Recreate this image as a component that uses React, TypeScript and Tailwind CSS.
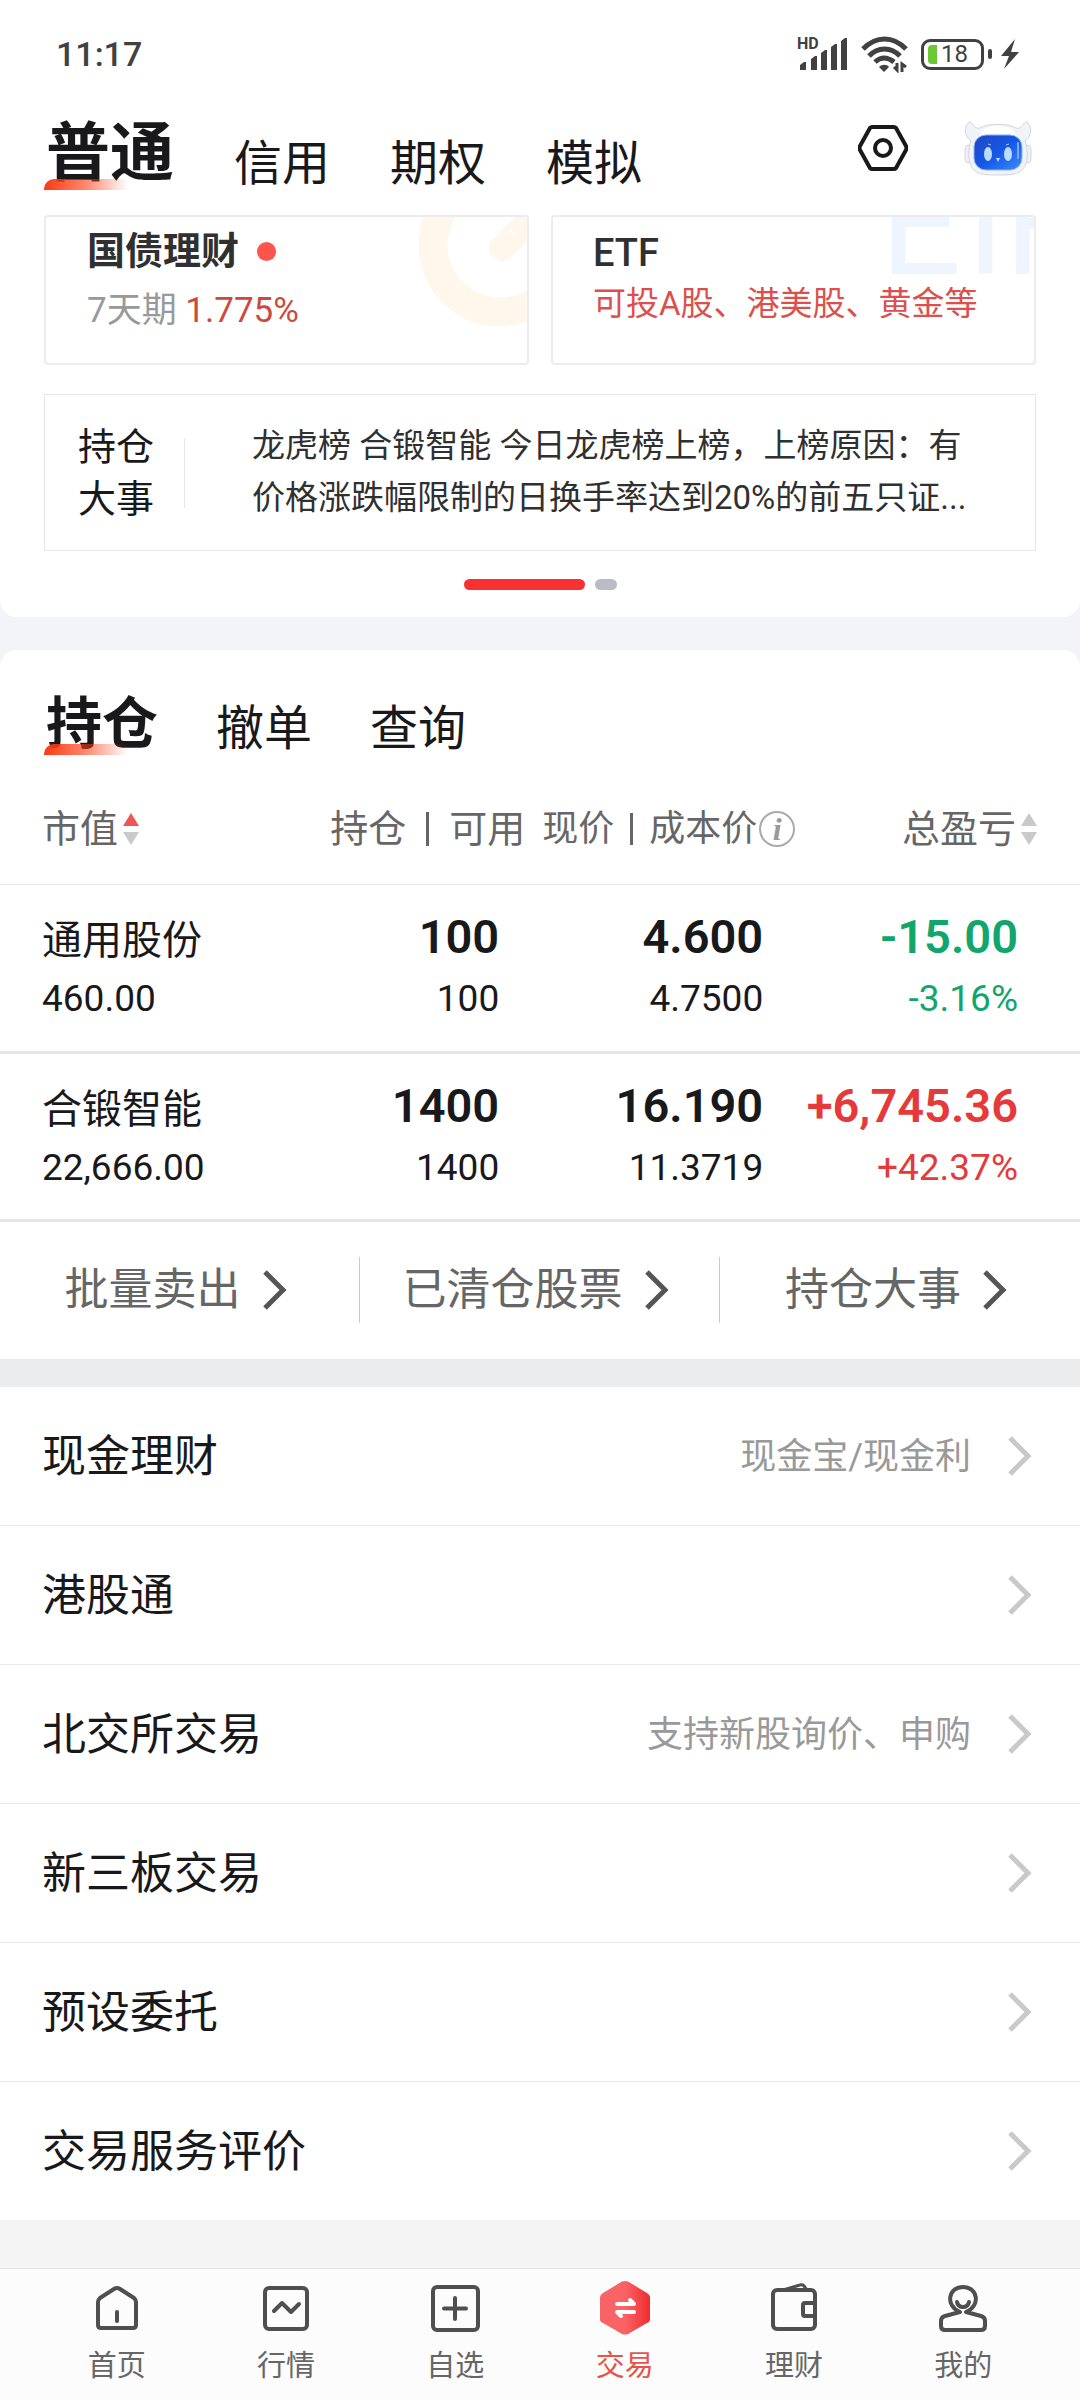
import type { ReactNode } from "react";

const holdings = [
  {
    name: "通用股份",
    value: "460.00",
    amount: "100",
    usable: "100",
    price: "4.600",
    cost: "4.7500",
    profit: "-15.00",
    rate: "-3.16%",
    color: "text-[#12a56c]",
  },
  {
    name: "合锻智能",
    value: "22,666.00",
    amount: "1400",
    usable: "1400",
    price: "16.190",
    cost: "11.3719",
    profit: "+6,745.36",
    rate: "+42.37%",
    color: "text-[#e5393a]",
  },
];

const services = [
  { title: "现金理财", note: "现金宝/现金利" },
  { title: "港股通", note: "" },
  { title: "北交所交易", note: "支持新股询价、申购" },
  { title: "新三板交易", note: "" },
  { title: "预设委托", note: "" },
  { title: "交易服务评价", note: "" },
];

function StatusBar() {
  return (
    <div className="flex h-[108px] items-center justify-between pl-14 pr-[60px] text-[#414141]">
      <span className="text-[34px] font-medium leading-none">11:17</span>
      <div className="flex items-center gap-3">
        <svg width="52" height="44" viewBox="0 -4 52 44" fill="currentColor">
          <text x="0" y="13" fontSize="16" fontWeight="700">HD</text>
          <path d="M3 29l4-3h2v8H3zM14 23l4-3h2v14h-6zM24 17l4-3h2v20h-6zM34 11l4-3h2v26h-6zM44 5l4-3h2v32h-6z" />
        </svg>
        <svg width="48" height="38" viewBox="0 0 48 38" fill="none" stroke="currentColor" strokeWidth="5">
          <path d="M2 14C15 .5 32 .5 45 14M8 21c9-9.500 22-9.500 31 0M14 27c6-5.500 12-5.500 19 0" />
          <path d="M18 32c3-3 8-3 10 0l-5 5z" fill="currentColor" stroke="none" />
          <path d="M36 28v7l-3-3M41 37v-8l4 3" strokeWidth="3" />
        </svg>
        <div className="flex items-center gap-1">
          <div className="flex h-[31px] w-[63px] items-center gap-1 rounded-[9px] border-3 border-[#414141] px-1">
            <span className="h-[19px] w-[9px] rounded-l-sm bg-[#6ac932]" />
            <span className="text-[24px] leading-none">18</span>
          </div>
          <span className="h-2.5 w-1 rounded-sm bg-[#414141]" />
        </div>
        <svg width="20" height="30" viewBox="0 0 20 30" fill="currentColor" className="-ml-1">
          <path d="M15 0L1 17h8L4 30l15-17h-8z" />
        </svg>
      </div>
    </div>
  );
}

function Robot() {
  return (
    <svg width="68" height="56" viewBox="0 0 68 56">
      <defs>
        <linearGradient id="face" x1="0" y1="0" x2="1" y2="1">
          <stop offset="0" stopColor="#2447c4" />
          <stop offset="0.5" stopColor="#1457e6" />
          <stop offset="1" stopColor="#3f8bff" />
        </linearGradient>
      </defs>
      <rect x="1" y="25" width="9" height="18" rx="4" fill="#f1eff3" stroke="#d5d5de" />
      <rect x="58" y="25" width="9" height="18" rx="4" fill="#f1eff3" stroke="#d5d5de" />
      <path
        d="M5 2C-1 8 1 17 7 21c-3 8-3 18 0 25 5 9 14 9 27 9s22 0 27-9c3-7 3-17 0-25 6-4 8-13 2-19-4-1-4 8-11 6C44 3 24 3 16 8 9 10 9 1 5 2z"
        fill="#f0f3f8"
        stroke="#d3d6de"
      />
      <path d="M20 9c8-4 20-4 28 0l5 7c-11-3-27-3-38 0z" fill="#fff" />
      <rect x="10" y="15" width="48" height="35" rx="12" fill="url(#face)" stroke="#8fb2f5" />
      <ellipse cx="24" cy="34" rx="4" ry="7" fill="#b9dcff" />
      <ellipse cx="44" cy="34" rx="4" ry="7" fill="#b9dcff" />
      <path d="M24 24l3 1M42 25l3-1" stroke="#9fc4ff" strokeWidth="1" />
      <path d="M32 38h4l-2 4z" fill="#b9dcff" />
      <path d="M54 23v15" stroke="#7da9f8" strokeWidth="2" strokeLinecap="round" />
    </svg>
  );
}

function Underline() {
  return (
    <span className="absolute -left-0.5 bottom-0 h-[11px] w-[84px] rounded-tl-[10px] bg-linear-to-r from-[#fb3a10] via-[#fb3a10]/60 to-transparent" />
  );
}

function TopTabs() {
  return (
    <header className="flex h-[107px] items-start justify-between pl-[46px] pr-12 text-[#19191b]">
      <nav className="flex h-[82px] items-end gap-[60px]">
        <button className="relative h-[82px] text-[64px] font-bold leading-[92px]">
          普通
          <Underline />
        </button>
        <button className="text-[48px] leading-[52px]">信用</button>
        <button className="text-[48px] leading-[52px]">期权</button>
        <button className="text-[48px] leading-[52px]">模拟</button>
      </nav>
      <div className="flex h-[80px] items-center gap-14">
        <button aria-label="设置">
          <svg width="50" height="46" viewBox="0 0 50 46" fill="none" stroke="currentColor" strokeWidth="4" strokeLinejoin="round">
            <path d="M14 2h22q1 0 2 1l10 18q1 2 0 4L38 43q-1 1-2 1H14q-1 0-2-1L2 25q-1-2 0-4L12 3q1-1 2-1z" />
            <circle cx="25" cy="23" r="8" />
          </svg>
        </button>
        <button aria-label="助手">
          <Robot />
        </button>
      </div>
    </header>
  );
}

function Promos() {
  return (
    <div className="grid grid-cols-2 gap-[22px]">
      <a href="#bond" className="relative h-[150px] overflow-hidden rounded-sm border-2 border-[#ebebf1] pl-[41px] pt-2">
        <svg className="absolute right-0 top-0" width="112" height="112" viewBox="0 0 112 112" fill="none" stroke="#fff7ec">
          <circle cx="85" cy="28" r="67" strokeWidth="29" />
          <path d="M87 31l36-36" strokeWidth="26" strokeLinecap="round" />
          <path d="M94 12l6 7" stroke="#fff" strokeWidth="2" />
        </svg>
        <div className="flex items-center gap-[18px]">
          <span className="text-[38px] font-bold leading-[52px] text-[#303030]">国债理财</span>
          <span className="size-[19px] rounded-full bg-[#fd544e]" />
        </div>
        <p className="text-[35px] leading-[68px]">
          <span className="text-[#999]">7天期</span>{" "}
          <span className="text-[#cb4a3d]">1.775%</span>
        </p>
      </a>
      <a href="#etf" className="relative h-[150px] overflow-hidden rounded-sm border-2 border-[#ebebf1] pl-10 pt-2">
        <svg className="absolute right-0 top-0" width="144" height="64" viewBox="0 0 144 64" fill="#eef5ff" fontSize="143" aria-hidden="true">
          <text x="-10" y="57">E</text>
          <text x="53" y="57">T</text>
          <text x="114" y="57">F</text>
        </svg>
        <p className="relative text-[38px] font-medium leading-[56px] text-[#303030]">ETF</p>
        <p className="relative text-[33px] leading-[46px] text-[#dc4f4c]">可投A股、港美股、黄金等</p>
      </a>
    </div>
  );
}

function News() {
  return (
    <a href="#news" className="mt-[29px] flex h-[157px] items-center border border-[#e6e6e8] pl-[33px]">
      <span className="text-[38px] leading-[52px] text-[#19191b]">
        持仓
        <br />
        大事
      </span>
      <span className="ml-[30px] h-[70px] w-px bg-[#e6e6e8]" />
      <span className="ml-[67px] whitespace-nowrap pb-0.5 text-[33px] leading-[52px] text-[#303030]">
        龙虎榜 合锻智能 今日龙虎榜上榜，上榜原因：有
        <br />
        价格涨跌幅限制的日换手率达到20%的前五只证...
      </span>
    </a>
  );
}

function Sort({ up }: { up?: boolean }) {
  return (
    <svg width="18" height="34" viewBox="0 0 18 34" fill="#c9c9c9">
      <path d="M9 1l8 13H1z" fill={up ? "#ee5653" : "#c9c9c9"} />
      <path d="M9 33l8-13H1z" />
    </svg>
  );
}

function Arrow({ className }: { className: string }) {
  return (
    <svg width="24" height="40" viewBox="0 0 24 40" fill="none" stroke="currentColor" strokeWidth="5" className={className}>
      <path d="M2 2l18 18L2 38" />
    </svg>
  );
}

function HoldingsTable() {
  return (
    <table className="w-full table-fixed border-collapse">
      <thead className="text-[38px] leading-[52px] text-[#666]">
        <tr className="h-[109px] border-b border-[#e8e8ea]">
          <th className="w-[29%] pl-[42px] text-left font-normal">
            <button className="flex items-center gap-1">
              市值
              <Sort up />
            </button>
          </th>
          <th className="w-[20%] whitespace-nowrap pr-1 font-normal">
            <div className="flex items-center justify-end gap-5">
              <span>持仓</span>
              <span className="h-[34px] w-[3px] bg-[#666]" />
              <span>可用</span>
            </div>
          </th>
          <th className="w-[25%] whitespace-nowrap pr-1 text-[36px] font-normal">
            <div className="flex items-center justify-end">
              <span>现价</span>
              <span className="mx-4 h-8 w-[3px] bg-[#666]" />
              <span>成本价</span>
              <span className="ml-0.5 flex size-9 items-center justify-center rounded-full border-2 border-[#aaa] font-['Liberation_Serif',serif] text-[32px] font-bold italic leading-none text-[#999]">
                i
              </span>
            </div>
          </th>
          <th className="w-[26%] pr-[42px] font-normal">
            <button className="ml-auto flex items-center gap-1">
              总盈亏
              <Sort />
            </button>
          </th>
        </tr>
      </thead>
      <tbody className="text-right text-[#19191b]">
        {holdings.map((h) => (
          <tr key={h.name} className="h-[168px] border-b-3 border-[#e5e5ea] align-top">
            <td className="pl-[42px] pt-5 text-left">
              <div className="text-[40px] leading-[72px]">{h.name}</div>
              <div className="text-[37px] leading-[44px]">{h.value}</div>
            </td>
            <td className="pr-[30px] pt-5">
              <div className="text-[47px] font-semibold leading-[64px]">{h.amount}</div>
              <div className="text-[37px] leading-[60px]">{h.usable}</div>
            </td>
            <td className="pr-9 pt-5">
              <div className="text-[47px] font-semibold leading-[64px]">{h.price}</div>
              <div className="text-[37px] leading-[60px]">{h.cost}</div>
            </td>
            <td className={`${h.color} pr-[62px] pt-5`}>
              <div className="text-[47px] font-semibold leading-[64px]">{h.profit}</div>
              <div className="text-[37px] leading-[60px]">{h.rate}</div>
            </td>
          </tr>
        ))}
      </tbody>
    </table>
  );
}

function Actions() {
  return (
    <div className="grid h-[137px] grid-cols-3 items-center text-[44px] text-[#666]">
      {["批量卖出", "已清仓股票", "持仓大事"].map((label, i) => (
        <a
          key={label}
          href="#action"
          className={`flex h-[66px] items-center justify-center gap-[22px] pr-2 ${i < 2 ? "border-r border-[#c9c9c9]" : ""}`}
        >
          {label}
          <Arrow className="text-[#555]" />
        </a>
      ))}
    </div>
  );
}

function ServiceList() {
  return (
    <ul className="divide-y divide-[#ececee] bg-white">
      {services.map((s) => (
        <li key={s.title}>
          <a href="#service" className="flex h-[138px] items-center pl-[42px] pr-12">
            <span className="flex-1 pt-0.5 text-[44px] text-[#19191b]">{s.title}</span>
            <span className="pt-0.5 text-[36px] text-[#999]">{s.note}</span>
            <Arrow className="ml-[37px] text-[#c9c9c9]" />
          </a>
        </li>
      ))}
    </ul>
  );
}

function NavItem({ label, active, children }: { label: string; active?: boolean; children: ReactNode }) {
  return (
    <a href="#nav" className={`flex flex-1 flex-col items-center gap-3 pt-[15px] ${active ? "text-[#e5534b]" : "text-[#666]"}`}>
      <svg
        width="48"
        height="48"
        viewBox="0 0 48 48"
        fill="none"
        stroke="#4f4f4f"
        strokeWidth="4"
        strokeLinecap="round"
        strokeLinejoin="round"
        className="overflow-visible"
      >
        {children}
      </svg>
      <span className="text-[29px] leading-[44px]">{label}</span>
    </a>
  );
}

function BottomNav() {
  return (
    <nav className="flex h-[132px] border-t border-[#e2e2e2] bg-[#fcfcfc] px-8">
      <NavItem label="首页">
        <path d="M21 5q3-2 6 0l14 9q2 2 2 4v23q0 3-3 3H8q-3 0-3-3V18q0-2 2-4z" />
        <path d="M24 28v9" />
      </NavItem>
      <NavItem label="行情">
        <rect x="3" y="4" width="42" height="41" rx="4" />
        <path d="M12 27l8-8 9 9 8-8" />
      </NavItem>
      <NavItem label="自选">
        <rect x="2" y="3" width="45" height="43" rx="4" />
        <path d="M24 14v21M13 24.500h22" />
      </NavItem>
      <NavItem label="交易" active>
        <defs>
          <linearGradient id="trade">
            <stop offset="0.5" stopColor="#fa6366" />
            <stop offset="1" stopColor="#ef2c2f" />
          </linearGradient>
        </defs>
        <path
          d="M21-2.500q3-1 6 0L46 9q3 2 3 4v22q0 3-3 4L27 50q-3 1-6 0L2 39q-3-1-3-4V13q0-2 3-4z"
          fill="url(#trade)"
          stroke="none"
        />
        <path d="M16 20h17l-4-4M33 28H16l4 4" stroke="#fff" />
      </NavItem>
      <NavItem label="理财">
        <rect x="3" y="6" width="42" height="39" rx="4" />
        <path d="M45 19H35q-2 0-2 2v9q0 2 2 2h10" />
        <path d="M13 6l17-5q3-1 4 1l3 4" strokeWidth="3" />
      </NavItem>
      <NavItem label="我的">
        <path d="M21 28C6 22 9 3 24 3s18 19 3 25l15 4q4 1 4 5v5q0 4-4 4H6q-4 0-4-4v-5q0-4 4-5z" />
        <path d="M18 18q1 5 6 5t6-5" />
      </NavItem>
    </nav>
  );
}

export default function App() {
  return (
    <div className="flex min-h-screen flex-col bg-[#f3f4f8] font-['Roboto','Noto_Sans_CJK_SC',sans-serif]">
      <section className="rounded-b-[17px] bg-white pb-[27px]">
        <StatusBar />
        <TopTabs />
        <div className="px-11">
          <Promos />
          <News />
        </div>
        <div className="mt-7 flex justify-center gap-2.5">
          <span className="h-[11px] w-[121px] rounded-full bg-[#f83132]" />
          <span className="h-[11px] w-[22px] rounded-full bg-[#bbbbc5]" />
        </div>
      </section>

      <section className="mt-[33px] rounded-t-[17px] bg-white pt-6">
        <nav className="flex h-[81px] items-end gap-[58px] pl-[46px] text-[#19191b]">
          <button className="relative h-[81px] text-[56px] font-bold leading-[100px]">
            持仓
            <Underline />
          </button>
          <button className="text-[48px] leading-[52px]">撤单</button>
          <button className="text-[48px] leading-[52px]">查询</button>
        </nav>
        <div className="mt-5">
          <HoldingsTable />
        </div>
        <Actions />
      </section>

      <div className="h-7 bg-[#ebecee]" />
      <ServiceList />
      <div className="min-h-[47px] flex-1 bg-[#f4f4f4]" />
      <BottomNav />
    </div>
  );
}
